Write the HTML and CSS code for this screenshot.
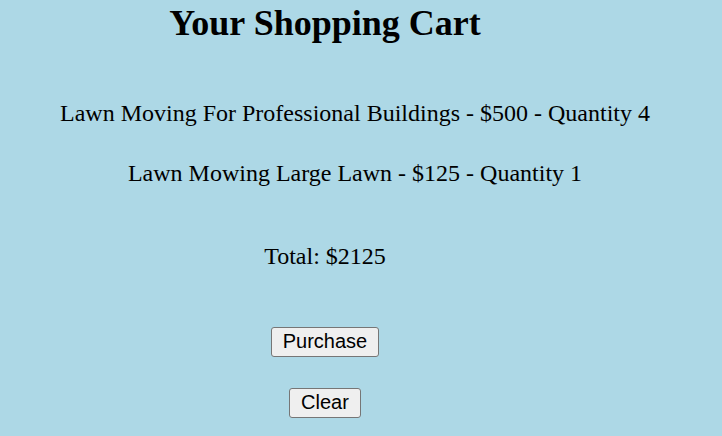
FILE: index.html
```html
<!DOCTYPE html>
<html>
<head>
<meta charset="utf-8">
<link rel="stylesheet" href="styles.css">
</head>
<body>
<div class="cart">
  <h1 class="title">Your Shopping Cart</h1>
  <ul class="items">
    <li class="item">Lawn Moving For Professional Buildings - $500 - Quantity 4</li>
    <li class="item">Lawn Mowing Large Lawn - $125 - Quantity 1</li>
  </ul>
  <p class="total">Total: $2125</p>
  <div class="actions">
    <button class="btn">Purchase</button>
    <button class="btn">Clear</button>
  </div>
</div>
</body>
</html>
```

FILE: styles.css
```css
html, body {
  margin: 0;
  padding: 0;
  background: #add8e6;
}
body {
  font-family: "Liberation Serif", "Times New Roman", serif;
  color: #000;
}
.cart {
  width: 650px;
  text-align: center;
  padding-top: 2px;
}
.title {
  margin: 0;
  font-size: 36px;
  font-weight: bold;
}
.items {
  list-style: none;
  margin: 0;
  padding: 56px 0 0 60px;
}
.item {
  font-size: 24px;
}
.item + .item {
  margin-top: 33px;
}
.total {
  font-size: 24px;
  margin: 56px 0 0;
}
.actions {
  display: flex;
  flex-direction: column;
  align-items: center;
  gap: 31px;
  padding-top: 57px;
}
.btn {
  font-family: "Liberation Sans", Arial, sans-serif;
  font-size: 20px;
  line-height: 23px;
  padding: 2px 11px 3px;
  background: #efefef;
  border: 1px solid #767676;
  border-radius: 3px;
  color: #000;
}
```
